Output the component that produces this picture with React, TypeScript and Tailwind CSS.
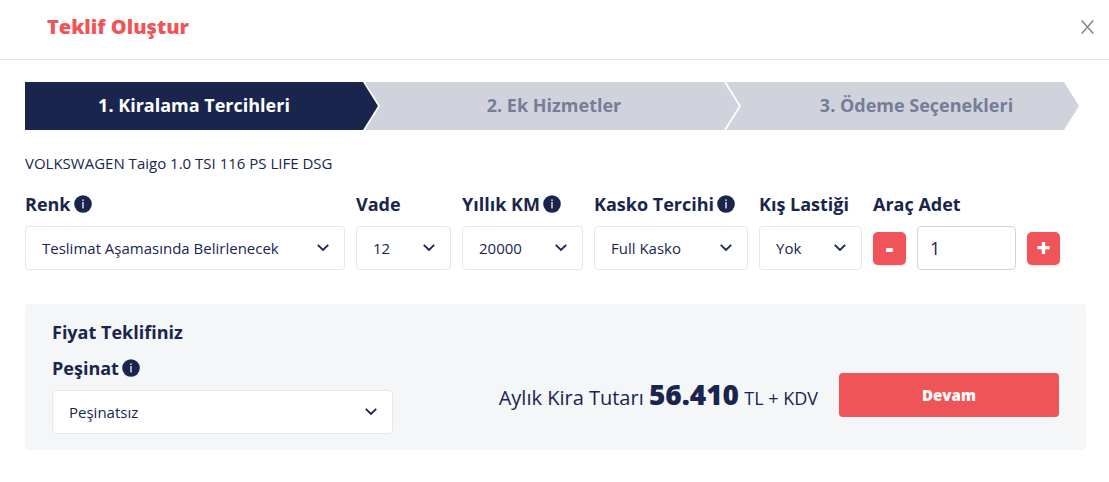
import React, { useState } from "react";
import { clsx } from "clsx";

interface SelectFieldProps {
  id: string;
  label: string;
  options: string[];
  info?: boolean;
  className?: string;
}

const steps = [
  {
    title: "1. Kiralama Tercihleri",
    className:
      "-mr-[13px] pr-[15px] bg-[#19254d] text-white [clip-path:polygon(0_0,calc(100%-15px)_0,100%_50%,calc(100%-15px)_100%,0_100%)]",
  },
  {
    title: "2. Ek Hizmetler",
    className:
      "-mr-[13px] pl-1 bg-[#d1d3dc] text-[#757d98] [clip-path:polygon(0_0,calc(100%-15px)_0,100%_50%,calc(100%-15px)_100%,0_100%,15px_50%)]",
  },
  {
    title: "3. Ödeme Seçenekleri",
    className:
      "pl-7 bg-[#d1d3dc] text-[#757d98] [clip-path:polygon(0_0,calc(100%-15px)_0,100%_50%,calc(100%-15px)_100%,0_100%,15px_50%)]",
  },
];

function InfoIcon() {
  return (
    <svg className="size-[18px] shrink-0" viewBox="0 0 18 18" aria-hidden="true">
      <circle cx="9" cy="9" r="8.8" fill="#19254d" />
      <rect x="8.2" y="4.4" width="1.6" height="1.6" fill="#d1d3dc" />
      <rect x="8.2" y="7" width="1.6" height="6.4" fill="#d1d3dc" />
    </svg>
  );
}

function SelectField({ id, label, options, info, className }: SelectFieldProps) {
  return (
    <div className={clsx("flex flex-col gap-2", className)}>
      <label htmlFor={id} className="flex items-center gap-[3px] h-7 text-lg font-bold whitespace-nowrap">
        {label}
        {info && <InfoIcon />}
      </label>
      <div className="relative">
        <select
          id={id}
          className="appearance-none w-full h-11 pl-4 pr-10 rounded border border-[#e6e7eb] bg-white text-[15px]"
        >
          {options.map((option) => (
            <option key={option}>{option}</option>
          ))}
        </select>
        <svg
          className="absolute right-4 top-[18px] w-3 h-2 pointer-events-none"
          viewBox="0 0 12 8"
          fill="none"
          stroke="#19254d"
          strokeWidth="1.8"
          aria-hidden="true"
        >
          <path d="M0.8 0.8L6 6L11.2 0.8" />
        </svg>
      </div>
    </div>
  );
}

export default function App() {
  const [count, setCount] = useState(1);

  return (
    <div className="bg-white text-[#19254d] font-['Open_Sans',sans-serif]">
      {/* Header */}
      <header className="flex items-center justify-between h-[60px] pl-[47px] pr-[15px] pb-[6px] border-b border-[#e4e5e7]">
        <h1 className="text-xl font-extrabold text-[#ef5459]">Teklif Oluştur</h1>
        <button type="button" aria-label="Kapat">
          <svg className="w-[13px] h-[14px]" viewBox="0 0 13 14" fill="none" stroke="#858585" strokeWidth="1.5">
            <path d="M0.7 0.5L12.3 13.5M12.3 0.5L0.7 13.5" />
          </svg>
        </button>
      </header>

      <main className="pl-[25px] pr-[23px] pt-[22px] pb-8">
        {/* Steps */}
        <ol className="grid grid-cols-[340fr_361fr_353fr] mr-[7px]">
          {steps.map((step) => (
            <li
              key={step.title}
              className={clsx("flex items-center justify-center h-12 pb-[2px] text-lg font-bold", step.className)}
            >
              {step.title}
            </li>
          ))}
        </ol>

        <p className="mt-[21px] text-[15px] leading-6">VOLKSWAGEN Taigo 1.0 TSI 116 PS LIFE DSG</p>

        {/* Preferences */}
        <div className="flex flex-wrap gap-[11px] mt-[15px]">
          <SelectField
            id="renk"
            label="Renk"
            info
            options={["Teslimat Aşamasında Belirlenecek"]}
            className="w-[320px]"
          />
          <SelectField id="vade" label="Vade" options={["12"]} className="w-[95px]" />
          <SelectField id="km" label="Yıllık KM" info options={["20000"]} className="w-[121px]" />
          <SelectField id="kasko" label="Kasko Tercihi" info options={["Full Kasko"]} className="w-[154px]" />
          <SelectField id="lastik" label="Kış Lastiği" options={["Yok"]} className="w-[103px]" />
          <div className="flex flex-col gap-2">
            <label htmlFor="adet" className="flex items-center h-7 text-lg font-bold">
              Araç Adet
            </label>
            <div className="flex items-center gap-[11px]">
              <button
                type="button"
                aria-label="Azalt"
                onClick={() => setCount(Math.max(1, count - 1))}
                className="size-[33px] rounded-[5px] bg-[#ef5459] text-white text-2xl leading-8 font-extrabold shadow-sm"
              >
                -
              </button>
              <input
                id="adet"
                type="text"
                inputMode="numeric"
                value={count}
                onChange={(e) => setCount(Number(e.target.value) || 1)}
                className="w-[99px] h-11 px-3 rounded border border-[#d3d4d8] text-lg"
              />
              <button
                type="button"
                aria-label="Artır"
                onClick={() => setCount(count + 1)}
                className="size-[33px] rounded-[5px] bg-[#ef5459] text-white text-2xl leading-8 font-extrabold shadow-sm"
              >
                +
              </button>
            </div>
          </div>
        </div>

        {/* Price offer */}
        <section className="mt-[34px] px-[27px] pt-[14px] pb-4 rounded bg-[#f4f6f8]">
          <h2 className="text-lg leading-7 font-bold">Fiyat Teklifiniz</h2>
          <div className="flex flex-wrap items-end justify-between mt-2">
            <SelectField id="pesinat" label="Peşinat" info options={["Peşinatsız"]} className="w-[341px]" />
            <div className="flex items-center gap-[21px] pb-[17px]">
              <p className="pb-[2px] text-xl whitespace-nowrap">
                Aylık Kira Tutarı <strong className="text-[28px] leading-9 font-extrabold">56.410</strong>{" "}
                <span className="text-lg">TL + KDV</span>
              </p>
              <button type="button" className="w-[220px] h-11 rounded bg-[#ef5459] text-white text-[15px] font-extrabold">
                Devam
              </button>
            </div>
          </div>
        </section>
      </main>
    </div>
  );
}
